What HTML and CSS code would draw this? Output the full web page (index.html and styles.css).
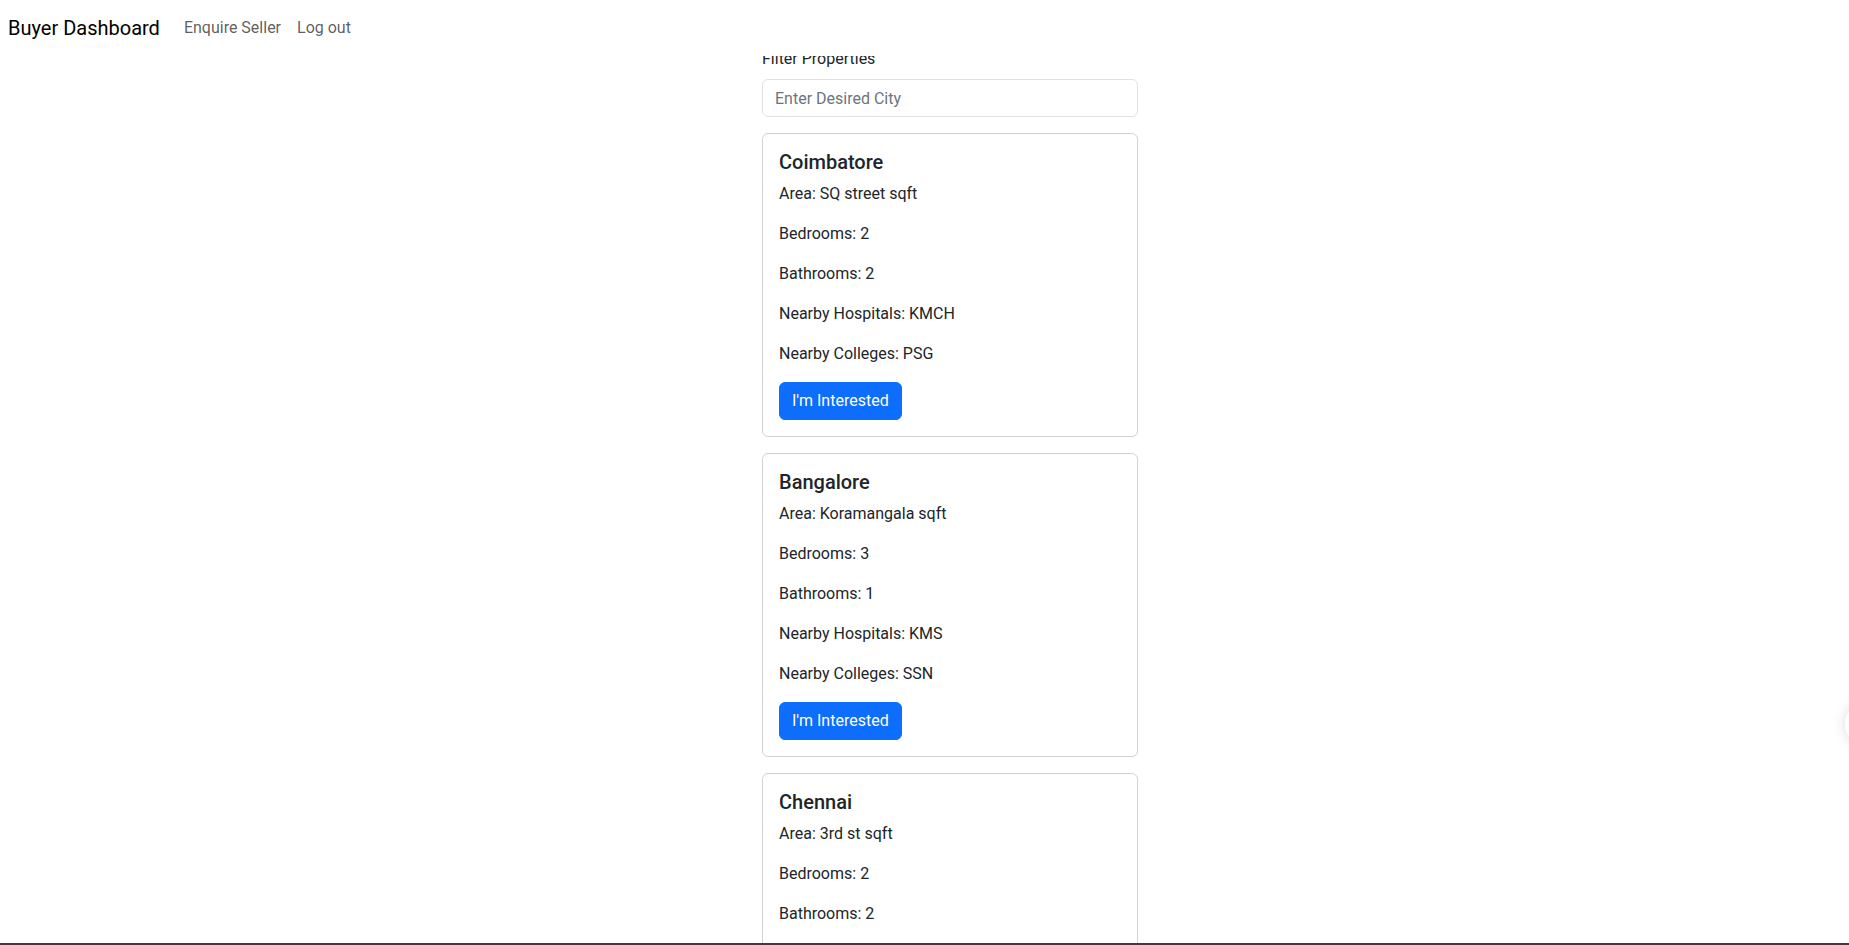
FILE: index.html
```html
<!DOCTYPE html>
<html lang="en">
<head>
<meta charset="utf-8">
<title>Buyer Dashboard</title>
<link rel="stylesheet" href="styles.css">
</head>
<body>
<nav class="navbar">
  <a class="brand" href="#">Buyer Dashboard</a>
  <ul class="nav">
    <li><a class="nav-link" href="#">Enquire Seller</a></li>
    <li><a class="nav-link" href="#">Log out</a></li>
  </ul>
</nav>
<main class="main">
  <div class="column">
    <label class="form-label" for="city">Filter Properties</label>
    <input class="form-control" id="city" type="text" placeholder="Enter Desired City">

    <div class="card">
      <h5 class="card-title">Coimbatore</h5>
      <p class="card-text">Area: SQ street sqft</p>
      <p class="card-text">Bedrooms: 2</p>
      <p class="card-text">Bathrooms: 2</p>
      <p class="card-text">Nearby Hospitals: KMCH</p>
      <p class="card-text">Nearby Colleges: PSG</p>
      <button class="btn" type="button">I'm Interested</button>
    </div>

    <div class="card">
      <h5 class="card-title">Bangalore</h5>
      <p class="card-text">Area: Koramangala sqft</p>
      <p class="card-text">Bedrooms: 3</p>
      <p class="card-text">Bathrooms: 1</p>
      <p class="card-text">Nearby Hospitals: KMS</p>
      <p class="card-text">Nearby Colleges: SSN</p>
      <button class="btn" type="button">I'm Interested</button>
    </div>

    <div class="card">
      <h5 class="card-title">Chennai</h5>
      <p class="card-text">Area: 3rd st sqft</p>
      <p class="card-text">Bedrooms: 2</p>
      <p class="card-text">Bathrooms: 2</p>
      <p class="card-text">Nearby Hospitals: Apollo</p>
      <p class="card-text">Nearby Colleges: Anna University</p>
      <button class="btn" type="button">I'm Interested</button>
    </div>
  </div>
</main>
<div class="edge-shadow"></div>
<div class="bottom-line"></div>
</body>
</html>
```

FILE: styles.css
```css
html {
  scrollbar-width: none;
}
html::-webkit-scrollbar {
  display: none;
}
body {
  margin: 0;
  background: #fff;
  color: #212529;
  font-family: Roboto, "Noto Sans", "Liberation Sans", sans-serif;
  font-size: 16px;
  line-height: 1.5;
}
.navbar {
  position: sticky;
  top: 0;
  z-index: 10;
  background: #fff;
  display: flex;
  align-items: center;
  height: 56px;
  padding: 0 8px;
  box-sizing: border-box;
}
.brand {
  font-size: 20px;
  line-height: 30px;
  color: #000;
  text-decoration: none;
  margin-right: 16px;
}
.nav {
  display: flex;
  list-style: none;
  margin: 0;
  padding: 0;
}
.nav-link {
  display: block;
  padding: 8px;
  color: rgba(0, 0, 0, 0.65);
  text-decoration: none;
  font-size: 16px;
}
.main {
  margin-top: -9px;
  display: grid;
  grid-template-columns: 762px 376px 1fr;
}
.column {
  grid-column: 2;
  display: flex;
  flex-direction: column;
}
.form-label {
  display: block;
  margin-bottom: 8px;
  line-height: 24px;
}
.form-control {
  display: block;
  box-sizing: border-box;
  width: 100%;
  height: 38px;
  padding: 6px 12px;
  font: inherit;
  color: #212529;
  border: 1px solid #dee2e6;
  border-radius: 6px;
  margin-bottom: 16px;
  outline: none;
}
.form-control::placeholder {
  color: #6c757d;
}
.card {
  border: 1px solid rgba(0, 0, 0, 0.175);
  border-radius: 6px;
  padding: 16px;
  margin-bottom: 16px;
  display: flex;
  flex-direction: column;
  align-items: flex-start;
}
.card-title {
  margin: 0 0 8px;
  font-size: 20px;
  font-weight: 500;
  line-height: 24px;
}
.card-text {
  margin: 0 0 16px;
  line-height: 24px;
}
.btn {
  height: 38px;
  padding: 6px 12px;
  font: inherit;
  color: #fff;
  background: #0d6efd;
  border: 1px solid #0d6efd;
  border-radius: 6px;
  cursor: pointer;
}
.edge-shadow {
  position: fixed;
  right: -40px;
  top: 702px;
  width: 44px;
  height: 44px;
  border-radius: 50%;
  background: #fff;
  box-shadow: 0 0 14px rgba(0, 0, 0, 0.15);
}
.bottom-line {
  position: fixed;
  left: 0;
  right: 0;
  bottom: 0;
  height: 2px;
  background: #343f49;
  z-index: 20;
}
```
